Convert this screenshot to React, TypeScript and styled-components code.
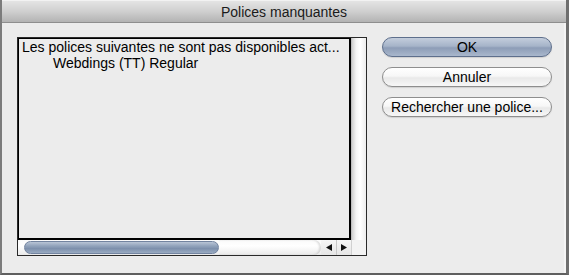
import React from "react";
import styled, { createGlobalStyle } from "styled-components";

const Global = createGlobalStyle`
  html, body { margin: 0; padding: 0; background: #ececec; }
  * { box-sizing: border-box; }
`;

const Window = styled.div`
  width: 569px;
  height: 275px;
  display: flex;
  flex-direction: column;
  background: #ececec;
  border-left: 2px solid #7c7c7c;
  border-right: 3px solid #6e6e6e;
  border-bottom: 2px solid #5f5f5f;
  font-family: "Liberation Sans", Arial, sans-serif;
  font-size: 14px;
  color: #000;
`;

const TitleBar = styled.div`
  height: 23px;
  flex: none;
  display: flex;
  align-items: center;
  justify-content: center;
  background: linear-gradient(#e4e4e4, #cfcfcf 50%, #b3b3b3);
  border-top: 1px solid #f2f2f2;
  border-bottom: 1px solid #8e8e8e;
  font-size: 14px;
  color: #1a1a1a;
  padding-top: 1px;
`;

const Body = styled.div`
  flex: 1;
  display: flex;
  align-items: flex-start;
  padding: 14px 0 0 15px;
  gap: 15px;
  border-right: 2px solid #f4f4f4;
`;

const ListFrame = styled.div`
  width: 350px;
  height: 219px;
  display: grid;
  grid-template-columns: 1fr 15px;
  grid-template-rows: 1fr 15px;
  border: 1px solid #2a2a2a;
`;

const TextArea = styled.div`
  border-top: 1px solid #000;
  border-left: 1px solid #000;
  border-right: 2px solid #000;
  border-bottom: 2px solid #000;
  background: #ececec;
  padding: 0 0 0 3px;
  line-height: 16px;
  white-space: nowrap;
  overflow: hidden;
`;

const Line = styled.div<{ $indent?: boolean }>`
  padding-left: ${(p) => (p.$indent ? "31px" : "0")};
`;

const VScroll = styled.div`
  background: linear-gradient(90deg, #cfcfcf, #f4f4f4 30%, #ffffff 60%, #ededed);
  border-left: 1px solid #bdbdbd;
`;

const HScroll = styled.div`
  display: flex;
  align-items: center;
  background: linear-gradient(#fafafa, #ffffff 40%, #eaeaea);
  padding-left: 6px;
`;

const Thumb = styled.div`
  width: 195px;
  height: 13px;
  border-radius: 7px;
  background: linear-gradient(#b9c5d6, #93a4bc 35%, #7d90ac 60%, #9aabc2);
  border: 1px solid #7384a0;
`;

const Track = styled.div`
  flex: 1;
  height: 100%;
  border-top-right-radius: 7px;
  border-bottom-right-radius: 7px;
  box-shadow: inset -2px 0 2px rgba(0, 0, 0, 0.12);
`;

const ArrowBtn = styled.div<{ $sep?: boolean }>`
  width: 15px;
  height: 100%;
  display: flex;
  align-items: center;
  justify-content: center;
  background: linear-gradient(#f6f6f6, #e6e6e6);
  border-left: ${(p) => (p.$sep ? "1px solid #c8c8c8" : "none")};
`;

const Corner = styled.div`
  background: #f3f3f3;
  border-left: 1px solid #d0d0d0;
`;

const Buttons = styled.div`
  display: flex;
  flex-direction: column;
  gap: 10px;
`;

const Button = styled.div<{ $default?: boolean }>`
  width: 170px;
  height: 20px;
  border-radius: 10px;
  display: flex;
  align-items: center;
  justify-content: center;
  font-size: 14px;
  color: #000;
  border: 1px solid ${(p) => (p.$default ? "#5e6f8c" : "#8e8e8e")};
  background: ${(p) =>
    p.$default
      ? "linear-gradient(#c3cddc, #a6b4c9 45%, #8d9db7 55%, #a9b7cc)"
      : "linear-gradient(#ffffff, #f7f7f7 45%, #e9e9e9 55%, #f7f7f7)"};
  box-shadow: 0 1px 1px rgba(0, 0, 0, 0.12);
`;

const Arrow = ({ dir }: { dir: "l" | "r" }) => (
  <svg width="6" height="7" viewBox="0 0 6 7">
    {dir === "l" ? <path d="M6 0 L0 3.5 L6 7 Z" fill="#111" /> : <path d="M0 0 L6 3.5 L0 7 Z" fill="#111" />}
  </svg>
);

export default function App() {
  return (
    <>
      <Global />
      <Window>
        <TitleBar>Polices manquantes</TitleBar>
        <Body>
          <ListFrame>
            <TextArea>
              <Line>Les polices suivantes ne sont pas disponibles act...</Line>
              <Line $indent>Webdings (TT) Regular</Line>
            </TextArea>
            <VScroll />
            <HScroll>
              <Thumb />
              <Track />
              <ArrowBtn>
                <Arrow dir="l" />
              </ArrowBtn>
              <ArrowBtn $sep>
                <Arrow dir="r" />
              </ArrowBtn>
            </HScroll>
            <Corner />
          </ListFrame>
          <Buttons>
            <Button $default>OK</Button>
            <Button>Annuler</Button>
            <Button>Rechercher une police...</Button>
          </Buttons>
        </Body>
      </Window>
    </>
  );
}
